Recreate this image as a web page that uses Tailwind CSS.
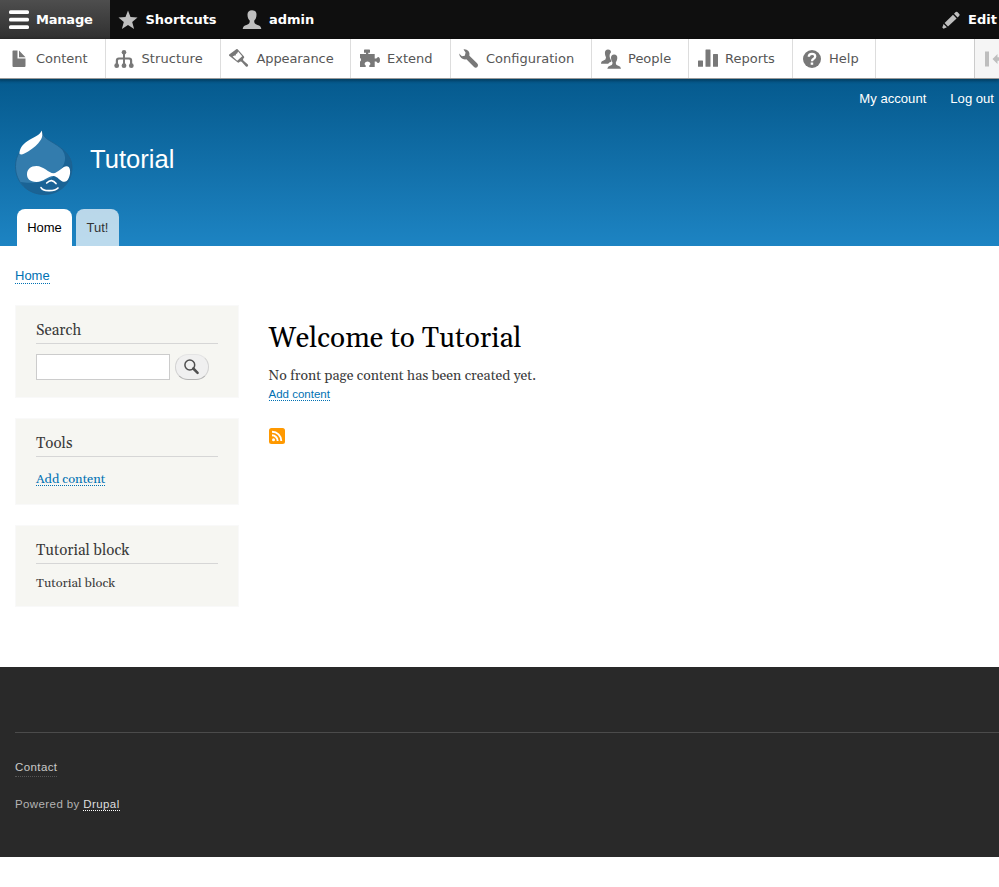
<!DOCTYPE html>
<html lang="en">
<head>
<meta charset="utf-8">
<title>Welcome to Tutorial | Tutorial</title>
<script src="https://cdn.jsdelivr.net/npm/@tailwindcss/browser@4"></script>
</head>
<body class="h-[887px] overflow-hidden bg-white font-['Liberation_Sans',Arial,sans-serif] text-[#3b3b3b]">

<!-- Administration bar -->
<nav class="flex h-[39px] bg-[#0f0f0f] font-['DejaVu_Sans',sans-serif] text-[13px] font-bold leading-[39px] text-white">
  <a class="flex w-[110px] items-center gap-[7px] bg-linear-to-b from-[#4e4e4e] to-[#303030] pl-[9px]">
    <svg class="h-5 w-5 shrink-0" viewBox="0 0 20 20" fill="#fff"><rect y="0.2" width="20" height="3.8" rx="1.5"/><rect y="7.700" width="20" height="3.8" rx="1.5"/><rect y="15.2" width="20" height="3.8" rx="1.5"/></svg>
    <span class="tracking-[-0.2px]">Manage</span>
  </a>
  <a class="flex w-[123px] items-center gap-[7.500px] pl-2">
    <svg class="h-5 w-5 shrink-0" viewBox="0 0 20 20" fill="#bebebe"><path d="M10 .5l2.500 6.400 7 .5-5.300 4.500 1.900 7-6.100-3.900-6.100 3.900 1.900-7L.5 7.400l7-.5z"/></svg>
    <span>Shortcuts</span>
  </a>
  <a class="flex items-center gap-[7px] pl-[9px]">
    <svg class="h-5 w-5 shrink-0" viewBox="0 0 20 20" fill="#bebebe"><path d="M10 .2c3 0 4.600 1.700 4.500 4.500 0 2.500-.8 4.500-2.300 6 0 2.500.8 3.400 3.300 4.200 2.300.7 3.500 1.500 3.800 4.200H.7c.3-2.700 1.500-3.500 3.800-4.200 2.500-.8 3.300-1.700 3.300-4.200-1.500-1.500-2.300-3.500-2.300-6C5.400 1.900 7 .2 10 .2z"/></svg>
    <span>admin</span>
  </a>
  <a class="ml-auto flex w-[58px] items-center gap-[7px]">
    <svg class="h-5 w-5 shrink-0" viewBox="0 0 20 20" fill="#bebebe"><path d="M14.700 2.100q.9-.8 1.700 0l1.900 1.900q.8.900 0 1.700l-1.700 1.700-3.600-3.600zM12 4.800l3.600 3.600-8.600 8.100-3.400-3.600zM2.600 13.900l3.300 3.300-3.400 1.500-1.200-1.200z"/></svg>
    <span>Edit</span>
  </a>
</nav>

<!-- Administration tray -->
<nav class="relative z-10 flex h-10 border-b border-[#999] bg-white font-['DejaVu_Sans',sans-serif] text-[13px] text-[#565656] shadow-[-1px_1px_3px_1px_rgba(0,0,0,0.333)]">
  <a class="flex w-[106px] items-center gap-[7px] border-r border-[#ddd] pl-[9px]">
    <svg class="h-5 w-5 shrink-0" viewBox="0 0 20 20" fill="#787878"><path d="M4 1.500h4.500v8h8V17q0 1-1 1h-11q-1 0-1-1V2zM10 1.500l6.500 6.800H10z"/></svg>
    <span>Content</span>
  </a>
  <a class="flex w-[115px] items-center gap-[7.500px] border-r border-[#ddd] pl-2">
    <svg class="h-5 w-5 shrink-0" viewBox="0 0 20 20" fill="#787878"><circle cx="10" cy="3.300" r="2.300"/><path d="M9 5h2v3.400h4.200q3 0 3 3V16h-2.200v-4.200q0-1.200-1.200-1.200H11V16H9v-5.400H5.200Q4 10.600 4 11.800V16H1.800v-4.600q0-3 3-3H9z"/><circle cx="2.700" cy="16.700" r="2.400"/><circle cx="10" cy="16.700" r="2.400"/><circle cx="17.300" cy="16.700" r="2.400"/></svg>
    <span class="tracking-[0.1px]">Structure</span>
  </a>
  <a class="flex w-[130px] items-center gap-[7.500px] border-r border-[#ddd] pl-2">
    <svg class="h-5 w-5 shrink-0" viewBox="0 0 20 20"><path fill="#787878" fill-rule="evenodd" d="M.2 5.600L7.300.2q.7-.5 1.300.1l6.200 6.900q.9 1-.1 2l-.7.700.3 1.500 4.300 3.900q1 1 .1 2-1 1-2 0l-4.100-4.500-1.400-.3-1 .8q-.9.700-1.700 0L.2 6.700q-.6-.6 0-1.100zM3.600 7.500l4.600 4.200 5-4.500L9.100 2.600 7.900 5 7.300 4.500l-.9 2.300-.8-.4z"/></svg>
    <span class="tracking-[-0.1px]">Appearance</span>
  </a>
  <a class="flex w-[100px] items-center gap-[7px] border-r border-[#ddd] pl-[9px]">
    <svg class="h-5 w-5 shrink-0" viewBox="0 0 20 20" fill="#787878"><path d="M0 5h6V3.700H4V1q0-.6.700-.6h4.600q.7 0 .7.600v2.700H8.300V5h6.400v4.600h1.600q1.200-1.900 2.600-1.400 1.100.4 1.100 2.800t-1.100 2.800q-1.400.500-2.600-1.400h-1.600V18H9.300v-1.500q1.500-.8 1-2.300-.6-1.800-2.800-1.800t-2.800 1.800q-.500 1.500 1 2.300V18H0v-5.500q1-.2 1-1.700T0 9.100z"/></svg>
    <span>Extend</span>
  </a>
  <a class="flex w-[141px] items-center gap-[7px] border-r border-[#ddd] pl-2">
    <svg class="h-5 w-5 shrink-0" viewBox="0 0 20 20" fill="#787878"><path d="M4.500.4q3-.4 4.900 1.700 1.600 1.800 1 4.600l7.700 7.600q1.900 1.900.3 3.600-1.700 1.700-3.600-.2L7.400 10.300Q4.300 10.900 2.300 9 .3 7.100.1 4.400L2.900 7.200l2.900-.5.800-3.200z"/></svg>
    <span>Configuration</span>
  </a>
  <a class="flex w-[97px] items-center gap-[7px] border-r border-[#ddd] pl-[9px]">
    <svg class="h-5 w-5 shrink-0" viewBox="0 0 20 20" fill="#787878"><path d="M7 .4c2 0 3.100 1 3 2.900C8.600 4.800 8.300 6.500 8.900 8.800q.4 1.500 1.400 2.700v1.200q-2.300.6-3.100 2H0c.1-2 .8-2.700 2.600-3.200Q5 10.800 5 8.500 3.900 6.500 3.900 4C3.900 1.600 5 .4 7 .4z"/><path d="M13.100 5.600c2.200 0 3.300 1.300 3.200 3.400q0 2.600-1.500 4.500c0 2 .6 2.800 2.500 3.200q2.400.7 2.700 3.100H6.300q.3-2.400 2.700-3.100c1.900-.4 2.500-1.200 2.500-3.200Q10 11.600 10 9c0-2.100 1-3.400 3.100-3.400z"/></svg>
    <span>People</span>
  </a>
  <a class="flex w-[104px] items-center gap-[7px] border-r border-[#ddd] pl-[9px]">
    <svg class="h-5 w-5 shrink-0" viewBox="0 0 20 20" fill="#787878"><rect x="0" y="11.500" width="5" height="6.200" rx=".5"/><rect x="7.500" y=".5" width="5" height="17.200" rx=".5"/><rect x="15" y="5" width="5" height="12.700" rx=".5"/></svg>
    <span>Reports</span>
  </a>
  <a class="flex w-[83px] items-center gap-[7px] border-r border-[#ddd] pl-[9px]">
    <svg class="h-5 w-5 shrink-0" viewBox="0 0 20 20"><circle cx="10" cy="10" r="9" fill="#787878"/><path d="M6.800 7.800q0-2.900 3.200-2.900t3.200 2.600q0 1.300-1.600 2.300Q10 10.700 10 12.300" fill="none" stroke="#fff" stroke-width="2.300"/><rect x="8.700" y="13.500" width="2.500" height="2.300" fill="#fff"/></svg>
    <span>Help</span>
  </a>
  <button class="ml-auto flex w-[25px] items-center overflow-hidden border-l border-[#ccc] bg-[#f5f5f5] pl-[10px]">
    <svg class="h-5 w-5 shrink-0" viewBox="0 0 20 20" fill="#bebebe"><rect y="2.500" width="4" height="15"/><path d="M7.500 10l5-5v3.300H20v3.400h-7.500V15z"/></svg>
  </button>
</nav>

<!-- Site header -->
<header class="flex h-[167px] flex-col bg-linear-to-b from-[#055a8e] to-[#1d84c3] text-white">
  <div class="flex h-[40px] justify-end gap-6 pr-[5px] text-[13.100px] leading-[40px]">
    <a>My account</a><a>Log out</a>
  </div>
  <div class="flex h-[90px] pl-[15px] pt-[11px]">
    <svg class="h-[66px] w-[58px] shrink-0" viewBox="0 0 58 66">
      <path d="M26.800.8c1.200 6.700 6.200 8.800 12.500 12.700C48 19 57 25.500 57 37 57 53 45 64.500 29 64.500S.5 52.500 .5 36.500c0-12 6-18 13.500-23C20 9.500 24.500 7.500 26.800.8z" fill="#337cad"/>
      <path d="M45 17.200c7 5 12 11 12 19.800C57 53 45 64.500 29 64.500 19 64.500 10 60 5.500 52c10 2 27 1 37-9 8-8 11-17 2.500-25.800z" fill="#1a6395"/>
      <path d="M26.800.8c1.200 6.700 6.200 8.800 12.500 12.700C48 19 57 25.500 57 37 57 53 45 64.500 29 64.500S.5 52.500 .5 36.500c0-12 6-18 13.500-23C20 9.500 24.500 7.500 26.800.8z" fill="none" stroke="#1c608e" stroke-width=".8"/>
      <path d="M26.700.5c.9 3.500.9 6.500-.7 9C22.500 15 18.500 18 13.500 21.200 9 23.700 6.200 26 4.400 23.600c.4-6.500 5-10.800 10.200-13.800C19.500 7 25 5 26.700.5z" fill="#fff"/>
      <path d="M21.500 36c7 0 12.200 7.200 17 7.300 4.200-.2 9-7 13.200-7 3.400 0 4 5 3.100 8.500-.8 3.700-2.600 7-5.300 7-4.200 0-7.200-6-11.200-5.900-5.500.2-10 6-16.800 6-6.800 0-9.600-3.300-9.500-7.900.2-4.700 3.500-8 9.500-8z" fill="#fff"/>
      <path d="M31.700 53q5-5 9.300.6M26 57.500q1 3 7.800 3.200 6.500.2 9.200-2.700" fill="none" stroke="#fff" stroke-width="1.700" stroke-linecap="round"/>
    </svg>
    <h1 class="pl-[17px] pt-[14px] text-[25.600px] leading-[30px]">Tutorial</h1>
  </div>
  <div class="flex h-[37px] gap-1 pl-[17px] text-[13px] leading-[37px]">
    <a class="w-[55px] rounded-t-lg bg-white text-center text-black">Home</a>
    <a class="w-[43px] rounded-t-lg bg-white/70 text-center text-[#333]">Tut!</a>
  </div>
</header>

<!-- Content -->
<main class="h-[421px] px-[15px] pt-[22px]">
  <div class="flex h-[37px] items-start text-[13px] leading-[15px] text-[#0071b3]"><a class="border-b border-dotted border-[#0071b3]">Home</a></div>
  <div class="flex font-[Georgia,Gelasio,'Liberation_Serif',serif]">
    <aside class="flex w-[224px] flex-col gap-5">
      <section class="h-[93px] border border-[#f9f9f9] bg-[#f6f6f2] px-5">
        <h2 class="h-[38px] border-b border-[#d6d6d6] pt-[15px] text-[15.100px] leading-5">Search</h2>
        <form class="flex gap-[5px] pt-[10px]">
          <input type="text" class="h-[26px] w-[134px] border border-[#ccc] bg-white">
          <button type="button" class="flex h-[26px] w-[34px] items-center justify-center rounded-full border border-[#e4e4e4] border-b-[#b4b4b4] border-x-[#d2d2d2] bg-[#f0f0f0]">
            <svg class="h-4 w-4" viewBox="0 0 16 16" fill="none" stroke="#505050"><circle cx="5.800" cy="6" r="4.900" stroke-width="1.500"/><path d="M9.300 9.500l4.300 4.300" stroke-width="2.500" stroke-linecap="round"/></svg>
          </button>
        </form>
      </section>
      <section class="h-[87px] border border-[#f9f9f9] bg-[#f6f6f2] px-5">
        <h2 class="h-[38px] border-b border-[#d6d6d6] pt-[15px] text-[15.100px] leading-5">Tools</h2>
        <div class="flex pt-[15px] text-[12.800px] leading-[14px] text-[#0071b3]"><a class="h-[14px] border-b border-dotted border-[#0071b3]">Add content</a></div>
      </section>
      <section class="h-[82px] border border-[#f9f9f9] bg-[#f6f6f2] px-5">
        <h2 class="h-[38px] border-b border-[#d6d6d6] pt-[15px] text-[15.100px] leading-5">Tutorial block</h2>
        <p class="pt-[11px] text-[12.800px] leading-4">Tutorial block</p>
      </section>
    </aside>
    <section class="flex flex-col items-start pl-[29.500px] pt-4">
      <h1 class="text-[28px] leading-9 text-black">Welcome to Tutorial</h1>
      <p class="pt-[9px] text-[14px] leading-5">No front page content has been created yet.</p>
      <a class="mt-[2px] border-b border-dotted border-[#0071b3] font-['Liberation_Sans',Arial,sans-serif] text-[11.500px] leading-[12px] text-[#0071b3]">Add content</a>
      <svg class="mt-[27px] h-4 w-4" viewBox="0 0 16 16"><rect width="16" height="16" rx="2.500" fill="#ff9900"/><circle cx="4.500" cy="11.700" r="1.500" fill="#fff"/><path d="M3 7.300a5.700 5.700 0 0 1 5.700 5.700M3 3.700a9.300 9.300 0 0 1 9.300 9.300" fill="none" stroke="#fff" stroke-width="1.900"/></svg>
    </section>
  </div>
</main>

<!-- Footer -->
<footer class="h-[190px] bg-[#292929] pl-[15px] pt-[65px] text-[11.500px] tracking-[0.4px] text-[#b3b3b3]">
  <div class="flex flex-col items-start border-t border-[#4b4b4b] pt-[24px]">
    <a class="h-5 border-b border-dotted border-[#555] leading-5 text-[#cacaca]">Contact</a>
    <p class="pt-[20px] leading-[14px]">Powered by <a class="border-b border-dotted border-white text-[#dedede]">Drupal</a></p>
  </div>
</footer>
</body>
</html>
